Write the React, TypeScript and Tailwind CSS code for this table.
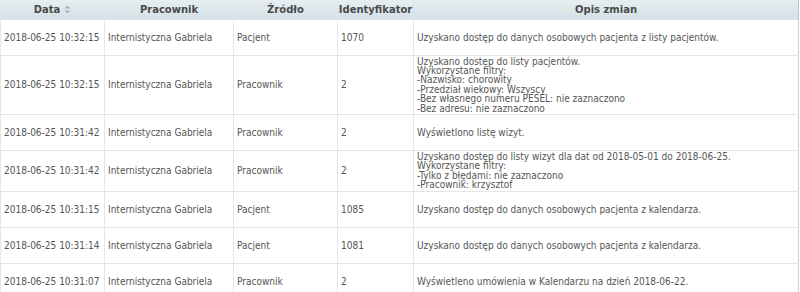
import React from "react";

type Row = { d: string; p: string; z: string; id: string; o: string[] };

const rows: Row[] = [
  { d: "2018-06-25 10:32:15", p: "Internistyczna Gabriela", z: "Pacjent", id: "1070", o: ["Uzyskano dostęp do danych osobowych pacjenta z listy pacjentów."] },
  {
    d: "2018-06-25 10:32:15", p: "Internistyczna Gabriela", z: "Pracownik", id: "2",
    o: [
      "Uzyskano dostep do listy pacjentów.",
      "Wykorzystane filtry:",
      "-Nazwisko: chorowity",
      "-Przedział wiekowy: Wszyscy",
      "-Bez własnego numeru PESEL: nie zaznaczono",
      "-Bez adresu: nie zaznaczono",
    ],
  },
  { d: "2018-06-25 10:31:42", p: "Internistyczna Gabriela", z: "Pracownik", id: "2", o: ["Wyświetlono listę wizyt."] },
  {
    d: "2018-06-25 10:31:42", p: "Internistyczna Gabriela", z: "Pracownik", id: "2",
    o: [
      "Uzyskano dostęp do listy wizyt dla dat od 2018-05-01 do 2018-06-25.",
      "Wykorzystane filtry:",
      "-Tylko z błędami: nie zaznaczono",
      "-Pracownik: krzysztof",
    ],
  },
  { d: "2018-06-25 10:31:15", p: "Internistyczna Gabriela", z: "Pacjent", id: "1085", o: ["Uzyskano dostęp do danych osobowych pacjenta z kalendarza."] },
  { d: "2018-06-25 10:31:14", p: "Internistyczna Gabriela", z: "Pacjent", id: "1081", o: ["Uzyskano dostęp do danych osobowych pacjenta z kalendarza."] },
  { d: "2018-06-25 10:31:07", p: "Internistyczna Gabriela", z: "Pracownik", id: "2", o: ["Wyświetleno umówienia w Kalendarzu na dzień 2018-06-22."] },
];

function SortIcon() {
  return (
    <svg width="7" height="9" viewBox="0 0 7 9" className="inline-block ml-[4px] align-[-1px]">
      <path d="M0.5 3.5 L3.5 0.5 L6.5 3.5 Z" fill="#a9b4ba" />
      <path d="M0.5 5.5 L3.5 8.5 L6.5 5.5 Z" fill="#a9b4ba" />
    </svg>
  );
}

export default function App() {
  const font = { fontFamily: '"DejaVu Sans", Verdana, sans-serif' };
  const cond = { fontFamily: '"DejaVu Sans Condensed", "DejaVu Sans", sans-serif', fontStretch: "condensed" as const };
  const td = "border border-[#dde7ec] px-[3px] align-middle text-[10px] text-[#555555] whitespace-nowrap";
  const th = "border-x border-[#dde7ec] text-center font-bold text-[10px] text-[#4a4a4a] h-[19px] py-0";
  return (
    <div className="w-[800px] h-[292px] overflow-hidden bg-white" style={font}>
      <table className="border-collapse w-[799px] table-fixed">
        <colgroup>
          <col className="w-[104px]" />
          <col className="w-[129px]" />
          <col className="w-[104px]" />
          <col className="w-[76px]" />
          <col />
        </colgroup>
        <thead>
          <tr className="bg-gradient-to-b from-[#e6eef2] to-[#d4e1e7]">
            <th className={th}>
              Data<SortIcon />
            </th>
            <th className={th}>Pracownik</th>
            <th className={th}>Źródło</th>
            <th className={th}>Identyfikator</th>
            <th className={th + " border-r-[#b8c2c7]"}>Opis zmian</th>
          </tr>
        </thead>
        <tbody style={cond}>
          {rows.map((r, i) => (
            <tr key={i} className={r.o.length > 1 ? "" : "h-[36px]"}>
              <td className={td}>{r.d}</td>
              <td className={td}>{r.p}</td>
              <td className={td}>{r.z}</td>
              <td className={td}>{r.id}</td>
              <td className={td + " border-r-[#c8d2d7]"}>
                {r.o.length > 1 ? (
                  <div className="leading-[9.4px] py-[1px]">
                    {r.o.map((l, j) => (
                      <div key={j}>{l}</div>
                    ))}
                  </div>
                ) : (
                  r.o[0]
                )}
              </td>
            </tr>
          ))}
        </tbody>
      </table>
    </div>
  );
}
